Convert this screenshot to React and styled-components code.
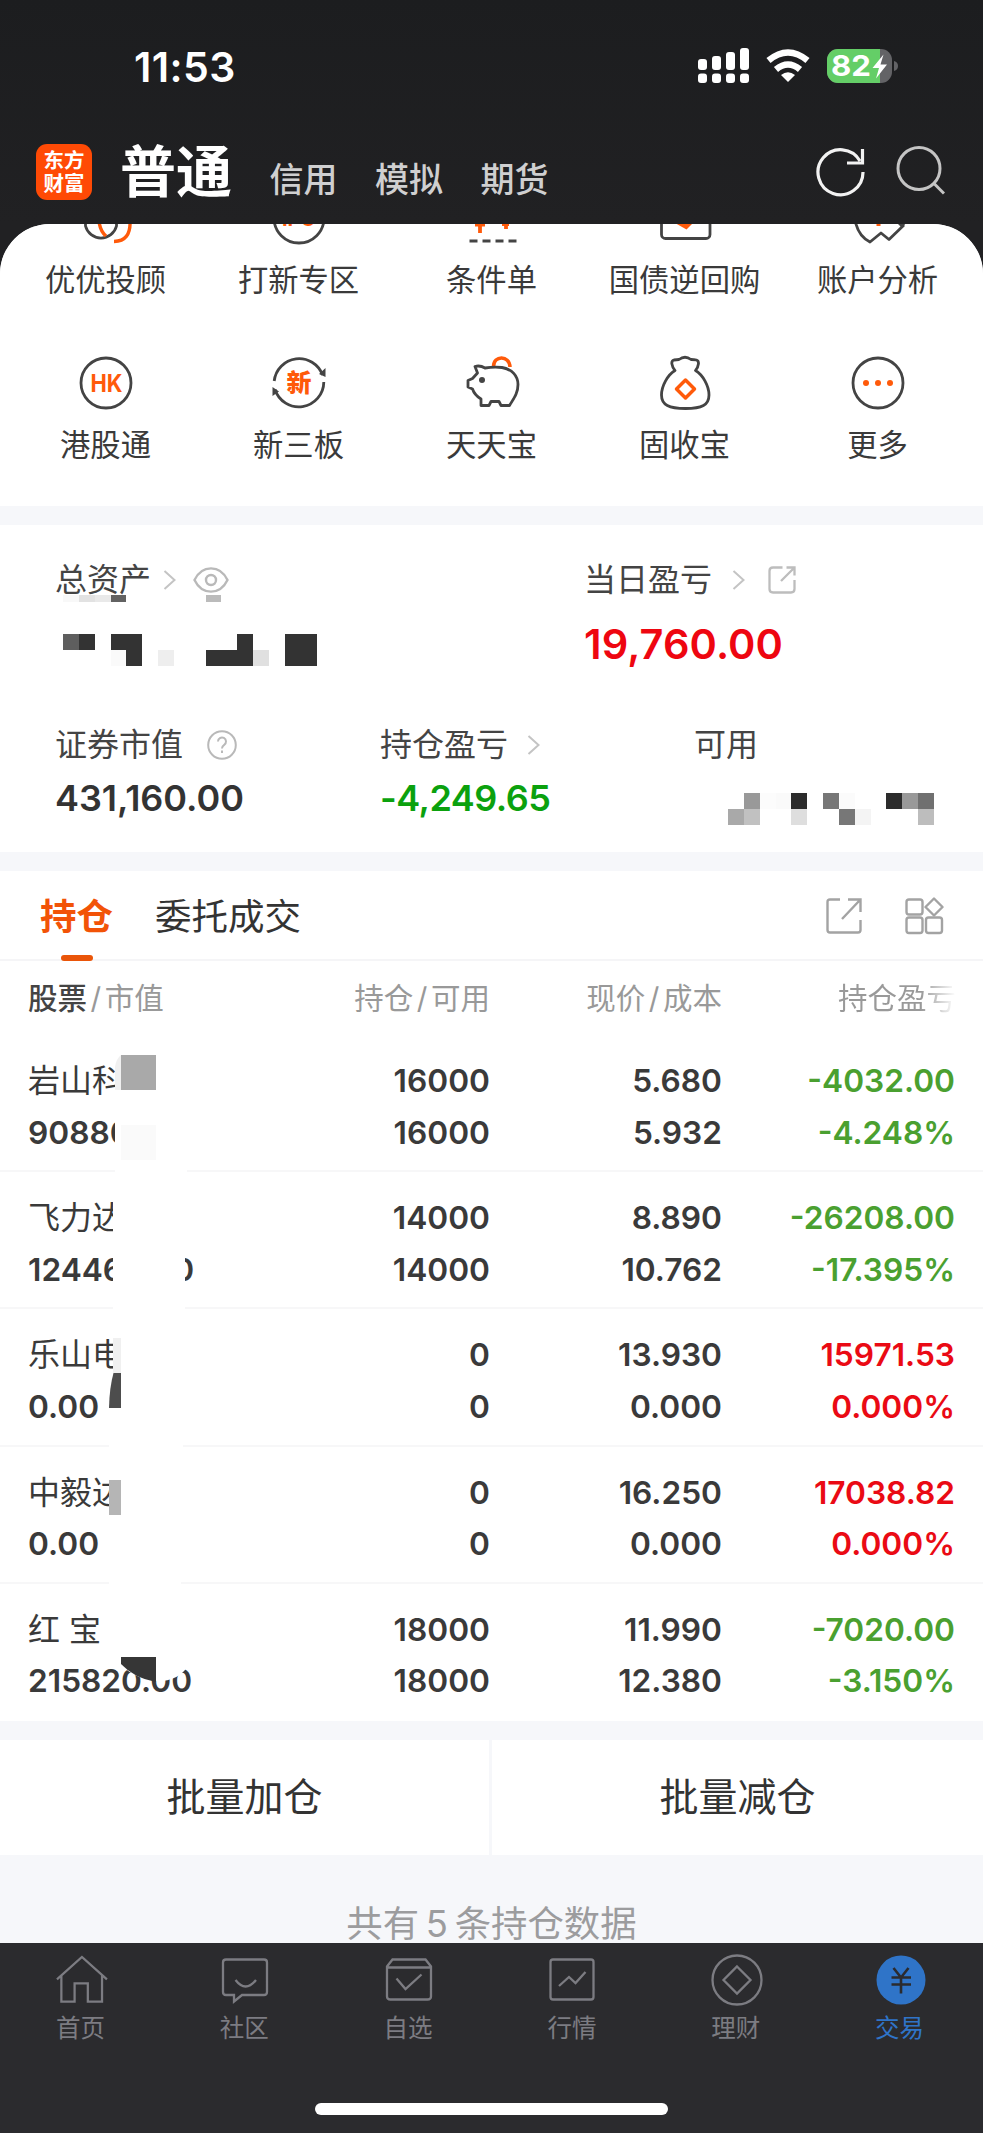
import React from 'react';
import styled, { createGlobalStyle } from 'styled-components';

const GlobalStyle = createGlobalStyle`
  * {
    box-sizing: border-box;
  }

  body {
    margin: 0;
    background: #1d1e20;
    font-family: 'Inter', 'Noto Sans CJK SC', sans-serif;
    color: #3a3a3a;
  }

  svg {
    display: block;
    flex: none;
  }
`;

const Screen = styled.div`
  width: 983px;
  height: 2133px;
  display: flex;
  flex-direction: column;
  overflow: hidden;
  background: linear-gradient(#1c1d1f 0, #212123 223px);
`;

const StatusBar = styled.div`
  height: 132px;
  flex: none;
  display: flex;
  justify-content: space-between;
  padding: 0 84px 0 134px;
`;

const Clock = styled.div`
  font-size: 41px;
  line-height: 134px;
  font-weight: 600;
  letter-spacing: 0.4px;
  color: #fff;
`;

const StatusIcons = styled.div`
  display: flex;
  align-items: center;
  gap: 17px;
`;

const TopBar = styled.header`
  height: 92px;
  flex: none;
  display: flex;
  align-items: flex-start;
  padding: 12px 38px 0 36px;
`;

const Logo = styled.div`
  width: 56px;
  height: 56px;
  border-radius: 11px;
  background: #ff4a05;
  color: #fff;
  font-size: 20.5px;
  line-height: 23px;
  font-weight: 700;
  text-align: center;
  padding-top: 5px;
`;

const AccountTabs = styled.nav`
  display: flex;
  align-items: baseline;
  flex: 1;
  padding-left: 28px;
  margin-top: -12px;
`;

const AccountTab = styled.span`
  font-size: ${(p) => (p.$active ? '56px' : '34px')};
  line-height: 80px;
  font-weight: ${(p) => (p.$active ? 700 : 500)};
  color: ${(p) => (p.$active ? '#fff' : '#cfcfd0')};
  margin-right: 37.5px;
`;

const TopActions = styled.div`
  display: flex;
  gap: 29px;
  padding-top: 1px;
`;

const Content = styled.main`
  flex: 1;
  min-height: 0;
  overflow: hidden;
  border-radius: 50px 50px 0 0;
  background: #f6f7fa;
`;

const Shortcuts = styled.section`
  height: 282px;
  padding: 0 9px;
  overflow: hidden;
  background: #fff;
  display: grid;
  grid-template-columns: repeat(5, 1fr);
  grid-template-rows: 165px 165px;
  margin-bottom: 19px;

  & > * {
    margin-top: -34.5px;
  }
`;

const Shortcut = styled.div`
  display: flex;
  flex-direction: column;
  align-items: center;
  font-size: 30.3px;
  line-height: 40px;
  white-space: nowrap;
  gap: 14px;
`;

const Assets = styled.section`
  height: 327px;
  background: #fff;
  padding-top: 35px;
  margin-bottom: 19px;
`;

const AssetRow = styled.div`
  display: grid;
  grid-template-columns: ${(p) => p.$columns};
  padding-left: 55px;
  height: ${(p) => p.$height}px;
`;

const Label = styled.div`
  display: flex;
  align-items: center;
  height: 40px;
  font-size: 32px;
  line-height: 40px;
  color: #444;

  svg {
    margin-left: ${(p) => p.$gap || 15}px;
  }

  svg + svg {
    margin-left: ${(p) => p.$gap2 || 17}px;
  }
`;

const Amount = styled.div`
  font-size: ${(p) => (p.$large ? 41.5 : 36)}px;
  line-height: ${(p) => (p.$large ? 88 : 66)}px;
  font-weight: 600;
  letter-spacing: ${(p) => p.$spacing || 0}px;
  color: ${(p) => p.$color || '#333'};
`;

const Mosaic = styled.div`
  display: grid;
  grid-template-columns: repeat(${(p) => p.$cols}, 15.85px);
  grid-auto-rows: ${(p) => p.$size || 16}px;
  margin: ${(p) => p.$margin};
`;

const Pixel = styled.i`
  background: ${(p) => p.$color};
`;

const Tabs = styled.div`
  height: 90px;
  display: flex;
  align-items: center;
  padding: 0 39px 0 40px;
  background: #fff;
  border-bottom: 2px solid #f5f5f7;
`;

const Tab = styled.div`
  position: relative;
  font-size: 36.5px;
  line-height: 92px;
  height: 88px;
  margin-right: 42px;
  color: ${(p) => (p.$active ? '#f25307' : '#333')};
  font-weight: ${(p) => (p.$active ? 700 : 400)};

  &::after {
    content: '';
    display: ${(p) => (p.$active ? 'block' : 'none')};
    position: absolute;
    left: 21px;
    bottom: -2px;
    width: 32px;
    height: 6px;
    border-radius: 3px;
    background: #ea5509;
  }
`;

const TabIcons = styled.div`
  margin: 2px 0 0 auto;
  display: flex;
  gap: 43px;
`;

const Table = styled.section`
  background: #fff;
`;

const HeadRow = styled.div`
  display: grid;
  grid-template-columns: 300px 162px 232px 234px;
  height: 74px;
  padding-left: 28px;
  line-height: 74px;
  font-size: 29.5px;
  color: #999;
  text-align: right;

  & > :first-child {
    text-align: left;
  }

  b {
    font-weight: 500;
    color: #444;
  }

  i {
    font-style: normal;
    padding: 0 3.5px;
  }
`;

const Faded = styled.span`
  background: linear-gradient(90deg, #999 70%, #fff 100%);
  background-clip: text;
  color: transparent;
`;

const Row = styled.div`
  position: relative;
  display: grid;
  grid-template-columns: 300px 162px 232px 233px;
  height: 137.2px;
  padding: 20px 0 0 28px;
  border-bottom: ${(p) => (p.$last ? 0 : 2)}px solid #f7f7f8;
`;

const Cell = styled.div`
  display: flex;
  flex-direction: column;
  text-align: ${(p) => (p.$left ? 'left' : 'right')};
  font-size: 31.7px;
  line-height: 51.5px;
  font-weight: 600;
  white-space: pre;
  color: ${(p) => p.$color || '#3a3a3a'};
`;

const Name = styled.span`
  font-weight: 400;
  font-size: 32px;
`;

const Cover = styled.svg`
  position: absolute;
  left: 100px;
  top: 0;
  z-index: 1;
`;

const BatchActions = styled.section`
  display: grid;
  grid-template-columns: 489px 491px;
  gap: 3px;
  margin-top: 19px;
`;

const BatchButton = styled.button`
  height: 115px;
  border: 0;
  padding: 0 0 6px;
  background: #fff;
  color: #333;
  font: 400 39px 'Noto Sans CJK SC', sans-serif;
`;

const Summary = styled.p`
  margin: 49px 0 0;
  font-size: 36.4px;
  line-height: 40px;
  word-spacing: -3.5px;
  text-align: center;
  color: #9c9c9e;
`;

const BottomNav = styled.footer`
  height: 190px;
  flex: none;
  background: #2b2b2e;
  display: flex;
  flex-direction: column;
  align-items: center;
  justify-content: space-between;
  padding-bottom: 18px;
`;

const NavItems = styled.div`
  width: 983px;
  display: grid;
  grid-template-columns: repeat(6, 1fr);
`;

const NavItem = styled.div`
  display: flex;
  flex-direction: column;
  align-items: center;
  padding-top: 9px;
  font-size: 24.5px;
  line-height: 30px;
  gap: 5px;
  color: ${(p) => (p.$active ? '#2f74c8' : '#7c7c82')};

  span {
    margin-left: -3px;
  }
`;

const HomeIndicator = styled.div`
  width: 353px;
  height: 12px;
  border-radius: 6px;
  background: #fff;
`;

const DARK = '#444';
const ORANGE = '#ff5a0a';
const RED = '#ea0a14';
const GREEN = '#4aa030';

const Glyph = ({ children }) => (
  <svg width="56" height="56" viewBox="0 0 56 56" fill="none" stroke={DARK} strokeWidth="2.8" strokeLinejoin="round">
    {children}
  </svg>
);

const shortcuts = [
  {
    label: '优优投顾',
    icon: (
      <>
        <path d="M7.5 28V36a16 16 0 0 0 31 0V28" />
        <path d="M21 31Q22 41 28 46M52 31Q53 51 36 51.5" stroke={ORANGE} strokeWidth="3.4" />
      </>
    ),
  },
  {
    label: '打新专区',
    icon: (
      <>
        <circle cx="28" cy="28" r="25" />
        <text x="28" y="36" fontSize="20" fontWeight="700" textAnchor="middle" fill={ORANGE} stroke="none">IPO</text>
      </>
    ),
  },
  {
    label: '条件单',
    icon: (
      <>
        <path d="M16 24V43M42 24V39M11 34.5h10M38 34h7" stroke={ORANGE} strokeWidth="3.8" />
        <path d="M5.5 51h48" strokeDasharray="8 5" strokeWidth="3.2" />
      </>
    ),
  },
  {
    label: '国债逆回购',
    icon: (
      <>
        <rect x="4.5" y="12" width="48.5" height="36.5" rx="4" />
        <path d="M18 33h18l-6.5 6.5z" fill={ORANGE} stroke="none" />
      </>
    ),
  },
  {
    label: '账户分析',
    icon: (
      <>
        <path d="M5 30Q8 46 20 52L31 43l8 6.500L54 35" />
        <path d="M47 33h9l-4 5z" fill={DARK} stroke="none" />
        <path d="M28.500 30v6" stroke={ORANGE} strokeWidth="4" />
      </>
    ),
  },
  {
    label: '港股通',
    icon: (
      <>
        <circle cx="28" cy="28" r="25" />
        <text x="28.500" y="36.800" fontSize="24.500" fontWeight="700" textAnchor="middle" textLength="32" lengthAdjust="spacingAndGlyphs" fill={ORANGE} stroke="none">HK</text>
      </>
    ),
  },
  {
    label: '新三板',
    icon: (
      <>
        <path d="M3.200 26A25 25 0 0 1 51.500 20M52.800 27A25 25 0 0 1 4 34.500" />
        <path d="M54.500 13v9l-6.500-3zM1.500 41V32l6.500 4.500z" fill={DARK} stroke="none" />
        <text x="28" y="36.500" fontSize="25" fontWeight="900" textAnchor="middle" fill={ORANGE} stroke="none">新</text>
      </>
    ),
  },
  {
    label: '天天宝',
    icon: (
      <>
        <path d="M29.500 11.500C29.500 0 45.500 0 46 12" stroke={ORANGE} strokeWidth="3.500" />
        <path d="M11 11.500Q16 10 21 13Q30 11.500 38 12.500C48 14 54 21 54 29.500C54 38 50 43 45.500 50.500H37L35 46.500H27L25 50.500H17V44Q10.500 40 8.500 34L4 32V25.500L8.500 23.500L13.500 18Z" />
        <circle cx="18" cy="25" r="3" fill={DARK} stroke="none" />
      </>
    ),
  },
  {
    label: '固收宝',
    icon: (
      <>
        <path d="M18 15.500C14.500 11 13.500 6 17 5Q20 4.500 22 4.500Q28 0 34 4.500Q37 4.500 39.500 5C42.500 6 42 11 38.500 15.500C46 20 52 31 52 40C52 50 45 53.500 28.500 53.500S4.500 50 4.500 40C4.500 31 10.500 20 18 15.500Z" />
        <path d="M28.500 25l9 9-9 9-9-9z" stroke={ORANGE} strokeWidth="3.500" />
      </>
    ),
  },
  {
    label: '更多',
    icon: (
      <>
        <circle cx="28" cy="28" r="25" />
        <g fill={ORANGE} stroke="none">
          <circle cx="16" cy="28" r="3" />
          <circle cx="28" cy="28" r="3" />
          <circle cx="40" cy="28" r="3" />
        </g>
      </>
    ),
  },
];

const Chevron = () => (
  <svg width="13" height="20" viewBox="0 0 13 20" fill="none" stroke="#c4c4c4" strokeWidth="2">
    <path d="M1.500 1L11.500 10L1.500 19" />
  </svg>
);

const Eye = () => (
  <svg width="36" height="28" viewBox="0 0 36 28" fill="none" stroke="#b9b9b9" strokeWidth="2.400">
    <path d="M1.500 14C9 -1.500 27 -1.500 34.500 14C27 29.500 9 29.500 1.500 14Z" />
    <circle cx="18" cy="14" r="5" />
  </svg>
);

const Help = () => (
  <svg width="30" height="30" viewBox="0 0 30 30" fill="none" stroke="#b9b9b9" strokeWidth="2">
    <circle cx="15" cy="15" r="13.800" />
    <path d="M11 11.500a4 4 0 1 1 6.200 3.300Q15 16.300 15 18.500M15 20.500v2.500" />
  </svg>
);

const ShareSmall = () => (
  <svg width="28" height="28" viewBox="0 0 28 28" fill="none" stroke="#bdbdbd" strokeWidth="2.300">
    <path d="M14.500 1.500H5Q1.500 1.500 1.500 5V23Q1.500 26.500 5 26.500H23Q26.500 26.500 26.500 23V14M13 15L26 2M18.500 1.500h8v8" />
  </svg>
);

const pixels = (rows) => rows.flat().map((color, i) => <Pixel key={i} $color={color || 'transparent'} />);

const K = '#333';
const totalMosaic = [
  ['#5e5e5e', K, 0, K, K, 0, 0, 0, 0, 0, 0, K, 0, 0, K, K],
  [0, 0, 0, '#fafafa', K, 0, '#eee', 0, 0, K, K, K, '#e0e0e0', 0, K, K],
];
const availableMosaic = [
  [0, '#999', '#fcfcfc', '#fafafa', '#2c2c2c', 0, '#777', '#fbfbfb', 0, 0, '#2c2c2c', '#999', '#707070'],
  ['#a9a9a9', '#c1c1c1', 0, 0, '#dedede', 0, 0, '#777', '#f4f4f4', 0, 0, 0, '#bdbdbd'],
];

const holdings = [
  {
    name: '岩山科', value: '90880', qty: ['16000', '16000'], price: ['5.680', '5.932'], profit: ['-4032.00', '-4.248%'], color: GREEN,
    cover: (
      <>
        <path d="M15 0H87V139H15z" fill="#fff" />
        <path d="M21 20V55H15V32Q16 24 21 20" fill="#f0f0f0" />
        <path d="M21 20h35v35H21z" fill="#a9a9a9" />
        <path d="M21 90h35v35H21z" fill="#fafafa" />
      </>
    ),
  },
  {
    name: '飞力达', value: '124460.00', qty: ['14000', '14000'], price: ['8.890', '10.762'], profit: ['-26208.00', '-17.395%'], color: GREEN,
    cover: <path d="M13 0H85V139H13z" fill="#fff" />,
  },
  {
    name: '乐山电', value: '0.00', qty: ['0', '0'], price: ['13.930', '0.000'], profit: ['15971.53', '0.000%'], color: RED,
    cover: (
      <>
        <path d="M13 0H83V139H9V99L13 64z" fill="#fff" />
        <path d="M13 29h8v35h-8z" fill="#f0f0f0" />
        <path d="M13.500 64H21v35H9Q9.500 78 13.500 64" fill="#4d4d4d" />
      </>
    ),
  },
  {
    name: '中毅达', value: '0.00', qty: ['0', '0'], price: ['16.250', '0.000'], profit: ['17038.82', '0.000%'], color: RED,
    cover: (
      <>
        <path d="M9 0H81V139H9z" fill="#fff" />
        <path d="M9 33h12v35H9z" fill="#b5b5b5" />
      </>
    ),
  },
  {
    name: '红 宝', value: '215820.00', qty: ['18000', '18000'], price: ['11.990', '12.380'], profit: ['-7020.00', '-3.150%'], color: GREEN,
    cover: (
      <>
        <path d="M11 0H83V74H92Q84 95 62 97Q31 97 15 73z" fill="#fff" />
        <path d="M21 73h35v25Q34 94 21 80z" fill="#363636" />
      </>
    ),
  },
];

const navItems = [
  { label: '首页', icon: <path d="M2.500 27L28 4L53.500 27M7 23V49.500H20.500V31H34V49.500H48.500V23" transform="translate(.5 1) scale(.98)" /> },
  { label: '社区', icon: <path d="M8 7.500H46Q49 7.500 49 10.500V40Q49 43 46 43H24L16 49.500V43H8Q5 43 5 40V10.500Q5 7.500 8 7.500zM17.500 28Q27.500 41 38 28" /> },
  { label: '自选', icon: <path d="M5 14.500L10.500 7.500H43.500L49 14.500V44.500Q49 47.500 45.500 47.500H8.500Q5 47.500 5 44.500zM5 15.500H49M14.500 26.500L23.500 37L39.500 22.500" /> },
  { label: '行情', icon: <path d="M8 7.500H46Q48.500 7.500 48.500 10V45Q48.500 47.500 46 47.500H8Q5.500 47.500 5.500 45V10Q5.500 7.500 8 7.500zM14 34L24 25L30.500 31L40.500 20" /> },
  { label: '理财', icon: <><circle cx="28" cy="28" r="24.500" /><path d="M28 14.500L41.500 28L28 41.500L14.500 28z" /></> },
  { label: '交易', active: true },
];

const App = () => (
  <>
    <GlobalStyle />
    <Screen>
      <StatusBar>
        <Clock>11:53</Clock>
        <StatusIcons>
          <svg width="51" height="36" viewBox="0 0 51 36" fill="#fff">
            {[11, 8, 4, 0].map((y, i) => (
              <g key={y}>
                <rect x={i * 14} y={y} width="9" height={22 - y} rx="3" />
                <rect x={i * 14} y="25.500" width="9" height="9.500" rx="3" />
              </g>
            ))}
          </svg>
          <svg width="44" height="34" viewBox="0 0 44 34" fill="none" stroke="#fff" strokeWidth="6.500">
            <path d="M2.500 11.500Q22 -4.500 41.500 11.500M10 20.500Q22 10.500 34 20.500" />
            <path d="M15 26Q22 20.500 29 26L22 33z" fill="#fff" stroke="none" />
          </svg>
          <svg width="72" height="36" viewBox="0 0 72 36">
            <clipPath id="cell"><rect y="1" width="65" height="34" rx="11" /></clipPath>
            <g clipPath="url(#cell)">
              <rect width="65" height="36" fill="#636366" />
              <rect width="53" height="36" fill="#64ce67" />
            </g>
            <path d="M67 13Q71 14 71 18T67 23z" fill="#636366" />
            <text x="4" y="28" fontSize="29" fontWeight="700" fill="#fff" textLength="40" lengthAdjust="spacingAndGlyphs">82</text>
            <path d="M56.500 6.500L45.500 20H52L49 30.500L60 16.500H53.500z" fill="#fff" />
          </svg>
        </StatusIcons>
      </StatusBar>

      <TopBar>
        <Logo>东方<br />财富</Logo>
        <AccountTabs>
          <AccountTab $active>普通</AccountTab>
          <AccountTab>信用</AccountTab>
          <AccountTab>模拟</AccountTab>
          <AccountTab>期货</AccountTab>
        </AccountTabs>
        <TopActions>
          <svg width="50" height="52" viewBox="0 0 50 52" fill="none" stroke="#f2f2f2" strokeWidth="3.200">
            <path d="M47 27A22.500 22.500 0 1 1 44 16M46.500 4V18H31" />
          </svg>
          <svg width="50" height="52" viewBox="0 0 50 52" fill="none" stroke="#c4c4c4" strokeWidth="3">
            <circle cx="24" cy="23.500" r="21" />
            <path d="M38.500 38L49 48.500" />
          </svg>
        </TopActions>
      </TopBar>

      <Content>
        <Shortcuts>
          {shortcuts.map((s) => (
            <Shortcut key={s.label}>
              <Glyph>{s.icon}</Glyph>
              {s.label}
            </Shortcut>
          ))}
        </Shortcuts>

        <Assets>
          <AssetRow $columns="529px 1fr" $height={165}>
            <div>
              <Label $gap={12}>总资产<Chevron /><Eye /></Label>
              <Mosaic $cols={11} $size={7} $margin="-5px 0 0 8px">
                {pixels([['#f8f8f8', '#e2e2e2', '#e9e9e9', '#626262', 0, 0, 0, 0, 0, '#bbb', 0]])}
              </Mosaic>
              <Mosaic $cols={16} $margin="32px 0 0 8px">{pixels(totalMosaic)}</Mosaic>
            </div>
            <div>
              <Label $gap={20} $gap2={23}>当日盈亏<Chevron /><ShareSmall /></Label>
              <Amount $large $color="#ee0610" $spacing={0.1}>19,760.00</Amount>
            </div>
          </AssetRow>
          <AssetRow $columns="325px 314px 1fr" $height={127}>
            <div>
              <Label $gap={24}>证券市值<Help /></Label>
              <Amount $spacing={-0.05}>431,160.00</Amount>
            </div>
            <div>
              <Label $gap={19}>持仓盈亏<Chevron /></Label>
              <Amount $color="#0ba10e" $spacing={-0.5}>-4,249.65</Amount>
            </div>
            <div>
              <Label>可用</Label>
              <Mosaic $cols={13} $margin="28px 0 0 34px">{pixels(availableMosaic)}</Mosaic>
            </div>
          </AssetRow>
        </Assets>

        <Tabs>
          <Tab $active>持仓</Tab>
          <Tab>委托成交</Tab>
          <TabIcons>
            <svg width="36" height="38" viewBox="0 0 36 38" fill="none" stroke="#a3a3a3" strokeWidth="2.400">
              <path d="M14 2.500H4Q1.500 2.500 1.500 5V33Q1.500 35.500 4 35.500H32Q34.500 35.500 34.500 33V23M16 22L34 3M22 2.500H34.500V15" />
            </svg>
            <svg width="39" height="38" viewBox="0 0 39 38" fill="none" stroke="#a3a3a3" strokeWidth="2.400">
              <rect x="1.500" y="2.500" width="16" height="15" rx="2.500" />
              <rect x="1.500" y="20.500" width="16" height="15.500" rx="2.500" />
              <rect x="21" y="20.500" width="16" height="15.500" rx="2.500" />
              <path d="M29 1.500L37.500 10L29 18.500L20.500 10z" strokeLinejoin="round" />
            </svg>
          </TabIcons>
        </Tabs>

        <Table>
          <HeadRow>
            <span><b>股票</b><i>/</i>市值</span>
            <span>持仓<i>/</i>可用</span>
            <span>现价<i>/</i>成本</span>
            <span><Faded>持仓盈亏</Faded></span>
          </HeadRow>
          {holdings.map((h, i) => (
            <Row key={h.name} $last={i === holdings.length - 1}>
              <Cell $left><Name>{h.name}</Name><span>{h.value}</span></Cell>
              {[h.qty, h.price].map(([top, bottom]) => (
                <Cell key={top}><span>{top}</span><span>{bottom}</span></Cell>
              ))}
              <Cell $color={h.color}><span>{h.profit[0]}</span><span>{h.profit[1]}</span></Cell>
              <Cover width="100" height="139" viewBox="0 0 100 139">{h.cover}</Cover>
            </Row>
          ))}
        </Table>

        <BatchActions>
          <BatchButton>批量加仓</BatchButton>
          <BatchButton>批量减仓</BatchButton>
        </BatchActions>
        <Summary>共有 5 条持仓数据</Summary>
      </Content>

      <BottomNav>
        <NavItems>
          {navItems.map((n) => (
            <NavItem key={n.label} $active={n.active}>
              <svg width="56" height="56" viewBox="0 0 56 56" fill="none" stroke="#7c7c82" strokeWidth="2.300">
                {n.active ? (
                  <>
                    <circle cx="28" cy="28" r="24.500" fill="#2f74c8" stroke="none" />
                    <path d="M20.500 16L28 25.500L35.500 16M18.500 25.500H38M18.500 32.500H38M28 25.500V41.500" stroke="#2b2b2e" strokeWidth="2.600" />
                  </>
                ) : n.icon}
              </svg>
              <span>{n.label}</span>
            </NavItem>
          ))}
        </NavItems>
        <HomeIndicator />
      </BottomNav>
    </Screen>
  </>
);

export default App;
